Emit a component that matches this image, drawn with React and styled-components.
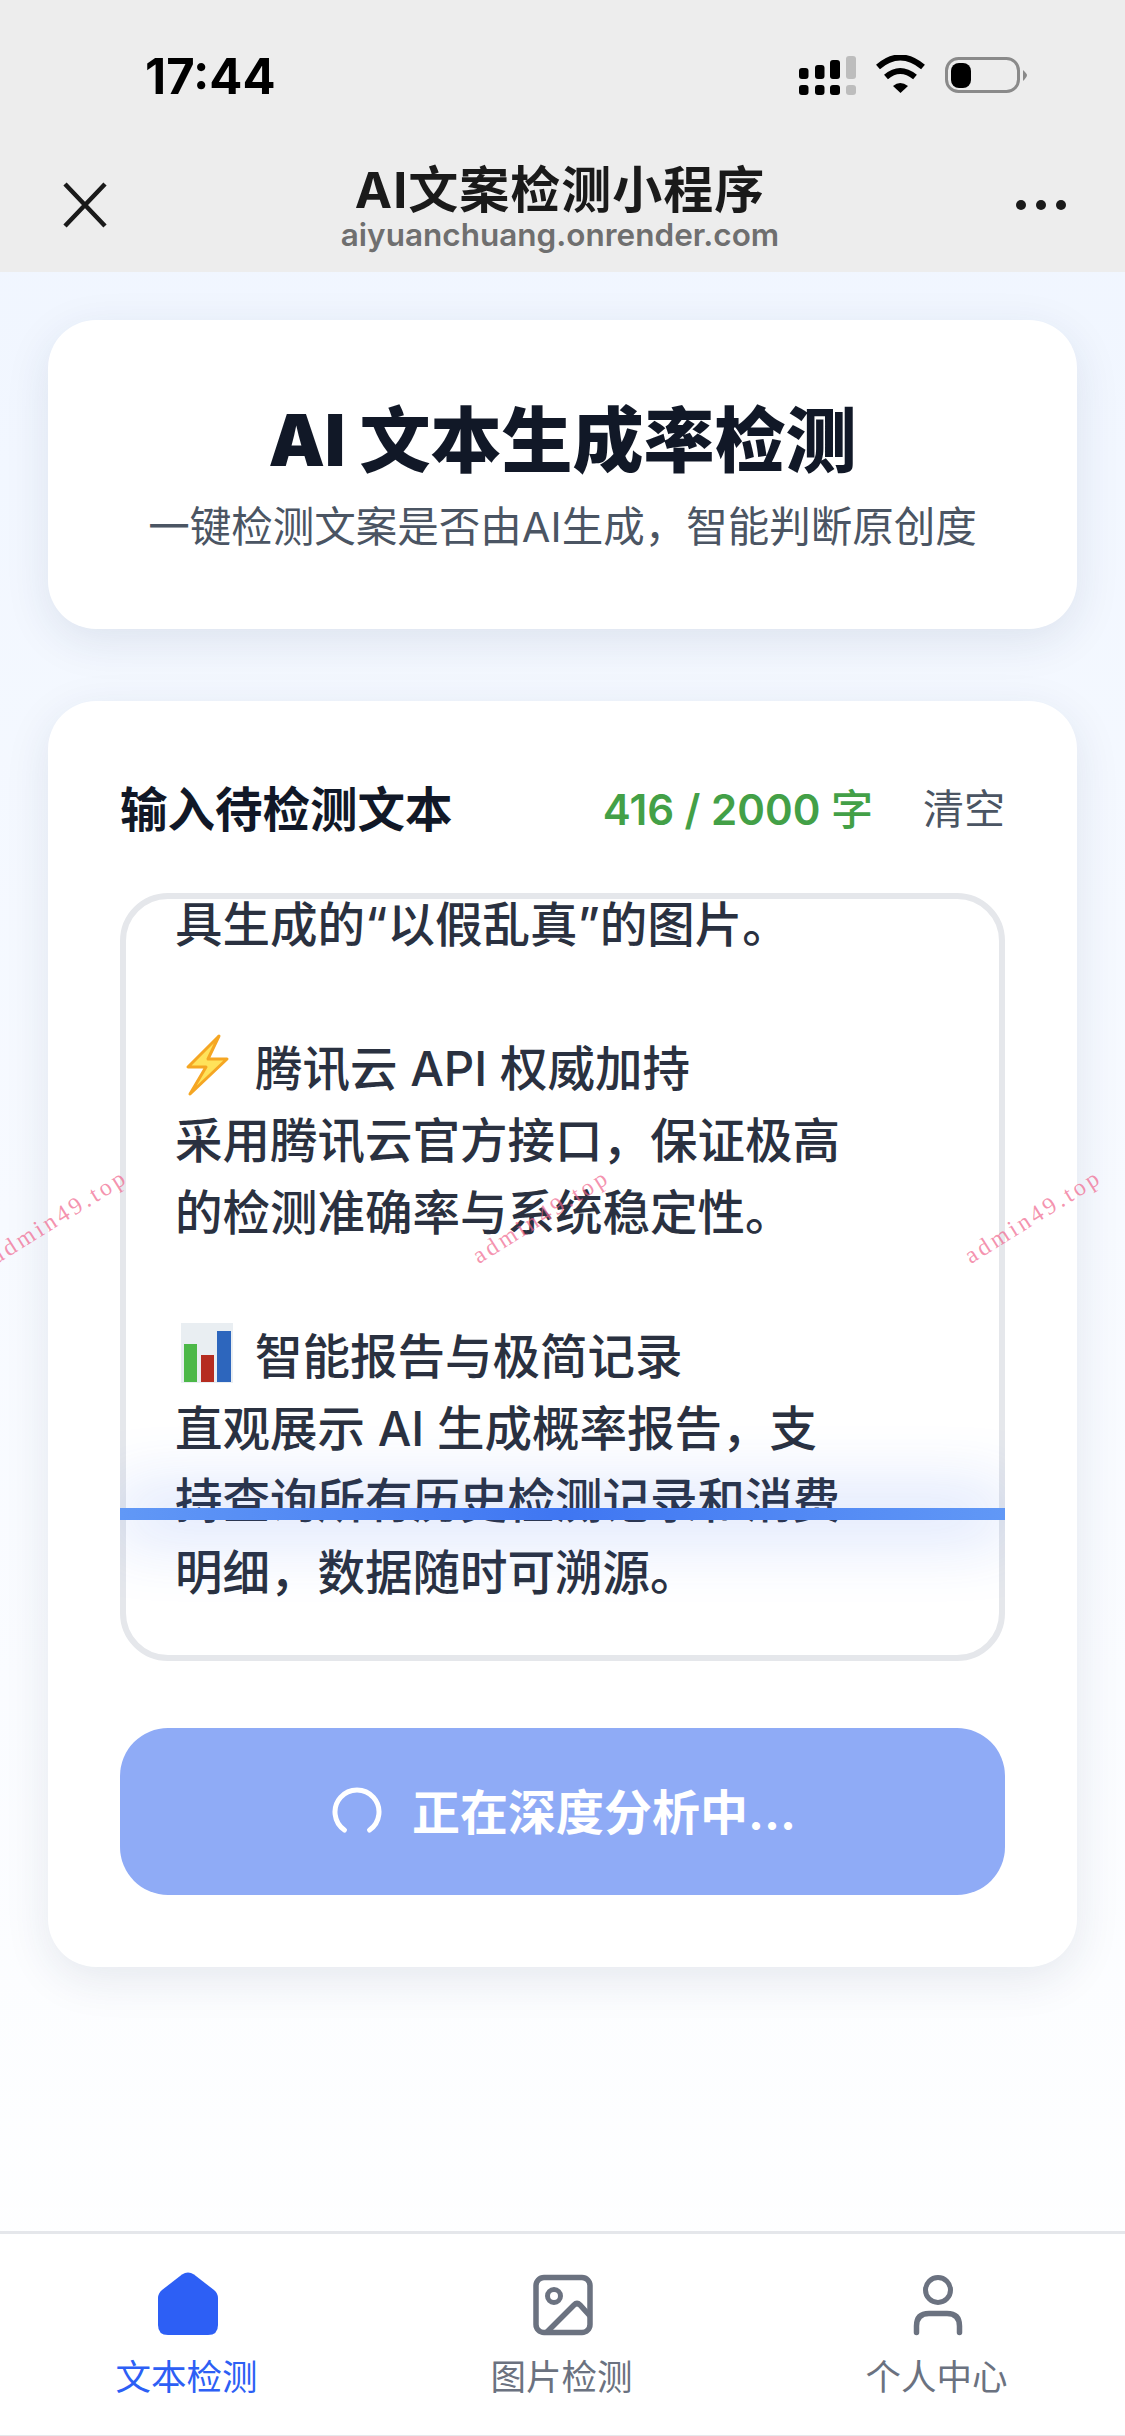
import styled, { createGlobalStyle } from 'styled-components';

const GlobalStyle = createGlobalStyle`
  html, body {
    margin: 0;
    padding: 0;
    background: #fff;
  }
  * {
    box-sizing: border-box;
  }
`

const Page = styled.div`
  position: relative;
  width: 1125px;
  height: 2436px;
  overflow: hidden;
  display: flex;
  flex-direction: column;
  font-family: Inter, "Noto Sans CJK SC", sans-serif;
  background: linear-gradient(180deg, #eff5ff 0%, #ffffff 100%);
`

const Header = styled.header`
  height: 272px;
  flex: none;
  background: #ededed;
  padding: 0 58px 0 63px;
`

const StatusBar = styled.div`
  height: 158px;
  display: flex;
  justify-content: space-between;
  align-items: flex-start;
  padding-top: 48px;
`

const Time = styled.div`
  margin-left: 82px;
  font-size: 49px;
  line-height: 58px;
  font-weight: 700;
  color: #000;
`

const StatusIcons = styled.svg`
  display: block;
  margin: 7px 40px 0 0;
`

const NavBar = styled.div`
  display: grid;
  grid-template-columns: 120px 1fr 120px;
  align-items: center;
`

const TitleBlock = styled.div`
  text-align: center;
  margin-left: -10px;
`

const AppTitle = styled.div`
  font-size: 50px;
  line-height: 64px;
  font-weight: 700;
  letter-spacing: 1px;
  color: #1a1a1a;
`

const AppDomain = styled.div`
  font-size: 31.5px;
  line-height: 32px;
  font-weight: 600;
  color: #6f6f6f;
  margin-top: -3px;
`

const Main = styled.main`
  flex: 1;
  padding: 48px 48px 0;
  display: flex;
  flex-direction: column;
  gap: 72px;
`

const Card = styled.section`
  background: #fff;
  border-radius: 48px;
  box-shadow: 0 12px 45px rgba(30, 50, 90, 0.1);
`

const HeroCard = styled(Card)`
  height: 309px;
  padding-top: 72px;
  text-align: center;
`

const HeroTitle = styled.h1`
  margin: 0;
  font-size: 71px;
  line-height: 96px;
  font-weight: 900;
  color: #111827;
`

const HeroSub = styled.p`
  margin: 9px 0 0;
  font-size: 41.5px;
  line-height: 60px;
  color: #4b5563;
`

const InputCard = styled(Card)`
  height: 1266px;
  padding: 72px;
`

const InputHead = styled.div`
  display: flex;
  align-items: center;
  height: 66px;
  margin-bottom: 54px;
`

const InputLabel = styled.div`
  font-size: 47.5px;
  font-weight: 700;
  color: #111827;
  margin-right: auto;
`

const Counter = styled.div`
  font-size: 42px;
  font-weight: 600;
  color: #43a047;
`

const CounterUnit = styled.span`
  font-weight: 500;
`

const ClearLink = styled.div`
  font-size: 41px;
  color: #4b5563;
  margin-left: 50px;
`

const TextFrame = styled.div`
  position: relative;
`

const TextBox = styled.div`
  height: 768px;
  border: 6px solid #e5e7eb;
  border-radius: 48px;
  overflow: hidden;
  padding: 0 49px;
`

const TextLines = styled.div`
  margin-top: -14px;
  font-size: 47.5px;
  font-weight: 500;
  color: #2a3140;
`

const Line = styled.div`
  height: 72px;
  white-space: pre;
  display: flex;
  align-items: center;
`

const EmojiIcon = styled.svg`
  flex: none;
  display: block;
  margin-right: 14px;
`

const ScanClip = styled.div`
  position: absolute;
  inset: 0;
  overflow: hidden;
  border-radius: 48px;
  pointer-events: none;
`

const ScanBar = styled.div`
  position: absolute;
  left: 0;
  right: 0;
  top: 615px;
  height: 12px;
  background: linear-gradient(90deg, #6198f6 0%, #3f76f2 50%, #6198f6 100%);
  box-shadow: 0 0 70px 4px rgba(59, 110, 240, 0.48);
`

const AnalyzeButton = styled.div`
  height: 167px;
  margin-top: 67px;
  padding-left: 3px;
  border-radius: 48px;
  background: #8fabf6;
  color: #fff;
  font-size: 48px;
  font-weight: 700;
  display: flex;
  align-items: center;
  justify-content: center;
  gap: 30px;
`

const ButtonLabel = styled.span`
  margin-bottom: 5px;
`

const BottomNav = styled.nav`
  height: 205px;
  flex: none;
  background: #fff;
  border-top: 3px solid #e5e7eb;
  border-bottom: 1px solid #e5e7eb;
  display: grid;
  grid-template-columns: repeat(3, 1fr);
`

const NavItem = styled.div`
  display: flex;
  flex-direction: column;
  align-items: center;
  padding-top: 38px;
  gap: 17px;
  font-size: 35.5px;
  line-height: 50px;
  color: ${props => (props.$active ? '#2d5ff5' : '#6b7280')};
`

const NavLabel = styled.span`
  margin-left: -2px;
`

const NavIcon = styled.svg`
  display: block;
`

const Watermark = styled.div`
  position: absolute;
  top: 1201px;
  left: ${props => props.$left}px;
  width: 170px;
  text-align: center;
  transform: rotate(-32deg);
  font-family: "Liberation Serif", serif;
  font-size: 24px;
  line-height: 30px;
  letter-spacing: 3.3px;
  color: rgba(240, 100, 140, 0.7);
  white-space: nowrap;
`

const Bolt = () => (
  <EmojiIcon width="66" height="62" viewBox="0 0 66 62">
    <path
      d="M44 2 L13 33 L31 33 L15 60 L52 25 L33 25 Z"
      fill="#ffe25a"
      stroke="#f5a623"
      strokeWidth="3"
      strokeLinejoin="round"
    />
  </EmojiIcon>
)

const ChartEmoji = () => (
  <EmojiIcon width="66" height="60" viewBox="0 0 66 60">
    <rect x="6" y="0" width="52" height="60" fill="#e9eef2" />
    <rect x="9" y="21" width="13" height="38" fill="#4cb848" />
    <rect x="26" y="32" width="13" height="27" fill="#b52c20" />
    <rect x="42" y="8" width="14" height="51" fill="#2d66bd" />
  </EmojiIcon>
)

const App = () => {
  return (
    <Page>
      <GlobalStyle />
      <Header>
        <StatusBar>
          <Time>17:44</Time>
          <StatusIcons width="232" height="42" viewBox="795 55 232 42">
            <g fill="#000">
              <rect x="799" y="68" width="9.5" height="11" rx="3" />
              <rect x="815" y="65" width="9.5" height="14" rx="3" />
              <rect x="830" y="60" width="10" height="19" rx="3" />
              <rect x="799" y="85" width="9.5" height="10" rx="3" />
              <rect x="815" y="85" width="9.5" height="10" rx="3" />
              <rect x="830" y="85" width="10" height="10" rx="3" />
            </g>
            <rect x="846" y="56" width="10" height="23" rx="3" fill="#bdbdbd" />
            <rect x="846" y="85" width="10" height="10" rx="3" fill="#bdbdbd" />
            <g fill="none" stroke="#000" strokeWidth="6">
              <path d="M878 67 Q900 48 923 67" />
              <path d="M886 77 Q900 65 915 77" />
            </g>
            <path d="M893 86 Q900 80 908 86 L900.5 93 Z" fill="#000" />
            <rect x="946.5" y="58.5" width="72" height="33" rx="12" fill="none" stroke="#8a8a8a" strokeWidth="3" />
            <rect x="951" y="63" width="20" height="25" rx="8" fill="#000" />
            <path d="M1023 70 Q1027 74 1027 75 Q1027 77 1023 81 Z" fill="#8a8a8a" />
          </StatusIcons>
        </StatusBar>
        <NavBar>
          <svg width="44" height="46" viewBox="0 0 44 46">
            <path d="M2 2 L42 44 M42 2 L2 44" stroke="#1a1a1a" strokeWidth="4.5" />
          </svg>
          <TitleBlock>
            <AppTitle>AI文案检测小程序</AppTitle>
            <AppDomain>aiyuanchuang.onrender.com</AppDomain>
          </TitleBlock>
          <svg width="120" height="20" viewBox="0 0 120 20">
            <circle cx="74" cy="10" r="5" fill="#1a1a1a" />
            <circle cx="94" cy="10" r="5" fill="#1a1a1a" />
            <circle cx="114" cy="10" r="5" fill="#1a1a1a" />
          </svg>
        </NavBar>
      </Header>

      <Main>
        <HeroCard>
          <HeroTitle>AI 文本生成率检测</HeroTitle>
          <HeroSub>一键检测文案是否由AI生成，智能判断原创度</HeroSub>
        </HeroCard>

        <InputCard>
          <InputHead>
            <InputLabel>输入待检测文本</InputLabel>
            <Counter>416 / 2000 <CounterUnit>字</CounterUnit></Counter>
            <ClearLink>清空</ClearLink>
          </InputHead>
          <TextFrame>
            <TextBox>
              <TextLines>
                <Line>具生成的“以假乱真”的图片。</Line>
                <Line> </Line>
                <Line><Bolt />腾讯云 API 权威加持</Line>
                <Line>采用腾讯云官方接口，保证极高</Line>
                <Line>的检测准确率与系统稳定性。</Line>
                <Line> </Line>
                <Line><ChartEmoji />智能报告与极简记录</Line>
                <Line>直观展示 AI 生成概率报告，支</Line>
                <Line>持查询所有历史检测记录和消费</Line>
                <Line>明细，数据随时可溯源。</Line>
              </TextLines>
            </TextBox>
            <ScanClip>
              <ScanBar />
            </ScanClip>
          </TextFrame>
          <AnalyzeButton>
            <svg width="50" height="50" viewBox="0 0 50 50">
              <path d="M12.4 43 A22 22 0 1 1 37.6 43" fill="none" stroke="#fff" strokeWidth="5" strokeLinecap="round" />
            </svg>
            <ButtonLabel>正在深度分析中...</ButtonLabel>
          </AnalyzeButton>
        </InputCard>
      </Main>

      <BottomNav>
        <NavItem $active>
          <NavIcon width="60" height="64" viewBox="0 0 60 64">
            <path d="M24 2.5 Q30 -1.5 36 2.5 L56 18 Q60 21.5 60 26 L60 53 Q60 63 50 63 L10 63 Q0 63 0 53 L0 26 Q0 21.5 4 18 Z" fill="#2d5ff5" />
          </NavIcon>
          <NavLabel>文本检测</NavLabel>
        </NavItem>
        <NavItem>
          <NavIcon width="60" height="64" viewBox="0 0 60 64">
            <rect x="3" y="5.5" width="54" height="55" rx="8" fill="none" stroke="#6b7280" strokeWidth="5.5" />
            <circle cx="21" cy="24" r="6.5" fill="none" stroke="#6b7280" strokeWidth="5" />
            <path d="M13 61 L41 33 Q44 30 47 33 L57 44" fill="none" stroke="#6b7280" strokeWidth="5.5" />
          </NavIcon>
          <NavLabel>图片检测</NavLabel>
        </NavItem>
        <NavItem>
          <NavIcon width="60" height="64" viewBox="0 0 60 64">
            <circle cx="30" cy="18" r="12.5" fill="none" stroke="#6b7280" strokeWidth="5" />
            <path d="M8.5 60.5 L8.5 54 Q8.5 41.5 21 41.5 L39 41.5 Q51.5 41.5 51.5 54 L51.5 60.5" fill="none" stroke="#6b7280" strokeWidth="5.5" strokeLinecap="round" />
          </NavIcon>
          <NavLabel>个人中心</NavLabel>
        </NavItem>
      </BottomNav>

      <Watermark $left={-26}>admin49.top</Watermark>
      <Watermark $left={456}>admin49.top</Watermark>
      <Watermark $left={948}>admin49.top</Watermark>
    </Page>
  );
}

export default App;
